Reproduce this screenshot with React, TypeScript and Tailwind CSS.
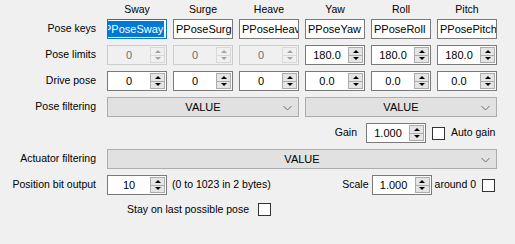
type SpinProps = {
  value: string;
  disabled?: boolean;
};

function Arrow({ up, disabled }: { up: boolean; disabled?: boolean }) {
  const color = disabled ? "border-b-[#a3a3a3]" : "border-b-black";
  const colorDown = disabled ? "border-t-[#a3a3a3]" : "border-t-black";
  return up ? (
    <span
      className={`h-0 w-0 border-x-[3px] border-b-[3px] border-x-transparent ${color}`}
    />
  ) : (
    <span
      className={`h-0 w-0 border-x-[3px] border-t-[3px] border-x-transparent ${colorDown}`}
    />
  );
}

function SpinBox({ value, disabled }: SpinProps) {
  return (
    <div
      className={`flex h-[20px] w-[60px] border ${
        disabled ? "border-[#cccccc] bg-[#f0f0f0]" : "border-[#7a7a7a] bg-white"
      }`}
    >
      <div
        className={`flex flex-1 items-center justify-center text-[11px] ${
          disabled ? "text-[#6d6d6d]" : "text-black"
        }`}
      >
        {value}
      </div>
      <div className="flex w-[16px] flex-col py-px pr-px">
        <div
          className={`flex flex-1 items-center justify-center border ${
            disabled ? "border-[#d9d9d9] bg-[#f0f0f0]" : "border-[#acacac] bg-[#e5e5e5]"
          }`}
        >
          <Arrow up disabled={disabled} />
        </div>
        <div
          className={`flex flex-1 items-center justify-center border border-t-0 ${
            disabled ? "border-[#d9d9d9] bg-[#f0f0f0]" : "border-[#acacac] bg-[#e5e5e5]"
          }`}
        >
          <Arrow up={false} disabled={disabled} />
        </div>
      </div>
    </div>
  );
}

function TextBox({ value, selected }: { value: string; selected?: boolean }) {
  return (
    <div
      className={`flex h-[20px] w-[60px] items-center overflow-hidden whitespace-nowrap border bg-white text-[11px] ${
        selected ? "border-[#0078d7]" : "border-[#7a7a7a] pl-[2px]"
      }`}
    >
      {selected ? (
        <span className="relative -ml-[4px] bg-[#0078d7] pr-px text-white">
          {value}
        </span>
      ) : (
        <span>{value}</span>
      )}
    </div>
  );
}

function Combo({ className }: { className: string }) {
  return (
    <div
      className={`relative flex h-[20px] items-center justify-center border border-[#adadad] bg-[#e1e1e1] text-[11px] ${className}`}
    >
      VALUE
      <svg
        className="absolute right-[6px] top-[7px]"
        width="9"
        height="6"
        viewBox="0 0 9 6"
      >
        <path d="M0.5 1 L4.5 5 L8.5 1" fill="none" stroke="#6d6d6d" strokeWidth="1" />
      </svg>
    </div>
  );
}

function CheckBox() {
  return <div className="h-[13px] w-[13px] shrink-0 border border-[#333333] bg-white" />;
}

function Label({ text }: { text: string }) {
  return (
    <div className="flex items-center justify-end whitespace-nowrap pr-[5px] text-[10.5px]">
      {text}
    </div>
  );
}

const axes = ["Sway", "Surge", "Heave", "Yaw", "Roll", "Pitch"];

export default function App() {
  return (
    <div className="h-[244px] w-[515px] overflow-hidden bg-[#f0f0f0] font-['Liberation_Sans',Arial,sans-serif] text-black">
      <div className="grid grid-cols-[101px_repeat(6,60px)] gap-x-[6px] pt-[3px]">
        <div />
        {axes.map((axis) => (
          <div className="h-[13px] text-center text-[10.5px] leading-[13px]" key={axis}>
            {axis}
          </div>
        ))}
      </div>

      <div className="mt-[3px] grid grid-cols-[101px_repeat(6,60px)] gap-x-[6px] gap-y-[6px] [grid-auto-rows:20px]">
        <Label text="Pose keys" />
        {axes.map((axis, i) => (
          <TextBox key={axis} value={`PPose${axis}`} selected={i === 0} />
        ))}

        <Label text="Pose limits" />
        <SpinBox value="0" disabled />
        <SpinBox value="0" disabled />
        <SpinBox value="0" disabled />
        <SpinBox value="180.0" />
        <SpinBox value="180.0" />
        <SpinBox value="180.0" />

        <Label text="Drive pose" />
        <SpinBox value="0" />
        <SpinBox value="0" />
        <SpinBox value="0" />
        <SpinBox value="0.0" />
        <SpinBox value="0.0" />
        <SpinBox value="0.0" />

        <Label text="Pose filtering" />
        <Combo className="col-span-3" />
        <Combo className="col-span-3" />
      </div>

      <div className="mt-[6px] flex h-[20px] items-center">
        <div className="w-[357px] text-right text-[10.5px]">Gain</div>
        <div className="ml-[9px]">
          <SpinBox value="1.000" />
        </div>
        <div className="ml-[6px]">
          <CheckBox />
        </div>
        <div className="ml-[6px] text-[10.5px]">Auto gain</div>
      </div>

      <div className="mt-[6px] grid grid-cols-[107px_390px]">
        <div className="flex items-center justify-end pr-[11px] text-[10.5px]">
          Actuator filtering
        </div>
        <Combo className="" />
      </div>

      <div className="mt-[6px] flex h-[20px] w-[495px] items-center">
        <div className="w-[107px] pr-[11px] text-right text-[10.5px]">Position bit output</div>
        <SpinBox value="10" />
        <div className="ml-[5px] flex-1 text-[10.5px]">(0 to 1023 in 2 bytes)</div>
        <div className="text-[10.5px]">Scale</div>
        <div className="ml-[3px]">
          <SpinBox value="1.000" />
        </div>
        <div className="ml-[3px] text-[10.5px]">around 0</div>
        <div className="ml-[6px]">
          <CheckBox />
        </div>
      </div>

      <div className="mt-[8px] flex h-[13px] items-center">
        <div className="w-[249px] text-right text-[10.5px]">Stay on last possible pose</div>
        <div className="ml-[9px]">
          <CheckBox />
        </div>
      </div>
    </div>
  );
}
